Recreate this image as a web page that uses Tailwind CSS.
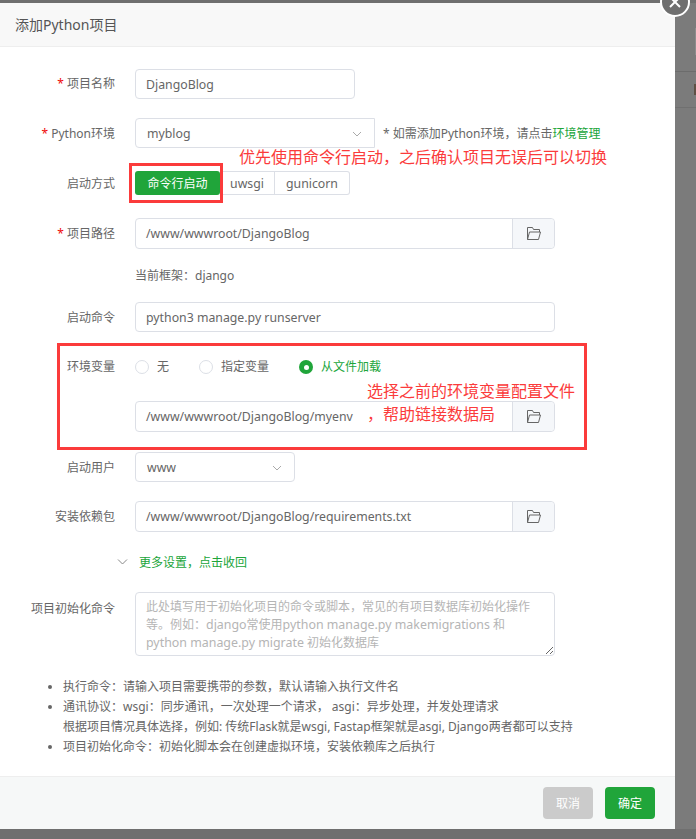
<!DOCTYPE html>
<html lang="zh-CN">

<head>
  <meta charset="UTF-8" />
  <title>添加Python项目</title>
  <script src="https://cdn.jsdelivr.net/npm/@tailwindcss/browser@4"></script>
</head>

<body class="relative h-[839px] w-[696px] overflow-hidden bg-[#7b7b7b] font-['Noto_Sans','Noto_Sans_CJK_SC',sans-serif] text-[12px] text-[#666]">

  <!-- page behind the overlay -->
  <div class="absolute left-[675px] top-[71px] h-[1px] w-[21px] bg-[#6c6c6c]"></div>
  <div class="absolute left-[675px] top-[107px] h-[1px] w-[21px] bg-[#707070]"></div>
  <div class="absolute left-[695px] top-[28px] h-[27px] w-[1px] bg-[#8c8c8c]"></div>
  <div class="absolute left-[694px] top-[84px] h-[11px] w-[2px] bg-[#5f5045]"></div>

  <div class="h-[3px] bg-[#6f6f6f]"></div>

  <!-- modal -->
  <div class="flex h-[826px] w-[675px] flex-col rounded-br-[3px] bg-white">
    <div class="flex h-[44px] items-center border-b border-[#eee] bg-[#f8f8f8] pl-[15px] text-[14px] text-[#555]">添加Python项目</div>

    <div class="flex-1 pt-[22px]">
      <div class="flex h-[30px] items-center">
        <label class="w-[115px] text-right"><span class="text-[#ef0808]">*</span> 项目名称</label>
        <div class="ml-[20px] flex h-[30px] w-[220px] items-center rounded-[4px] border border-[#dcdfe6] pl-[10px] pt-[2px] text-[12.3px]">DjangoBlog</div>
      </div>

      <div class="mt-[19px] flex h-[30px] items-center">
        <label class="w-[115px] pt-[1px] text-right"><span class="text-[#ef0808]">*</span> Python环境</label>
        <div class="ml-[20px] flex h-[30px] w-[240px] items-center justify-between rounded-l-[4px] border border-[#dcdfe6] pl-[11px] pr-[12px] pt-[2px] text-[12.3px]">
          myblog
          <svg class="h-[6px] w-[10px]" viewBox="0 0 10 6" fill="none" stroke="#aaa"><path d="M1 1l4 4 4-4" /></svg>
        </div>
        <span class="ml-[8px] pt-[1px]">* 如需添加Python环境，请点击<span class="text-[#20a53a]">环境管理</span></span>
      </div>

      <div class="mt-[23px] flex h-[24px] items-center">
        <label class="w-[115px] pt-[2px] text-right">启动方式</label>
        <div class="ml-[20px] flex h-[24px]">
          <div class="flex w-[85px] items-center justify-center rounded-[3px] bg-[#20a53a] pt-[2px] text-white">命令行启动</div>
          <div class="flex w-[55px] items-center justify-center border-y border-r border-[#dcdfe6] pt-[2px] text-[12.3px]">uwsgi</div>
          <div class="flex w-[75px] items-center justify-center rounded-r-[3px] border-y border-r border-[#dcdfe6] pt-[2px] text-[12.3px]">gunicorn</div>
        </div>
      </div>

      <div class="mt-[23px] flex h-[31px] items-center">
        <label class="w-[115px] text-right"><span class="text-[#ef0808]">*</span> 项目路径</label>
        <div class="ml-[20px] flex h-[31px] w-[420px] rounded-[4px] border border-[#dcdfe6]">
          <div class="flex flex-1 items-center pl-[10px] pt-[2px] text-[12.3px]">/www/wwwroot/DjangoBlog</div>
          <div class="flex w-[42px] items-center justify-center rounded-r-[4px] border-l border-[#dcdfe6] bg-[#f5f7fa]">
            <svg class="h-[13px] w-[14px]" viewBox="0 0 14 13" fill="none" stroke="#666"><path d="M.5 12.500V.5h5l1 2h6v2.500M.5 12.500h11l2-7.500H2.500l-2 7.500z" /></svg>
          </div>
        </div>
      </div>

      <div class="ml-[135px] mt-[18px] flex h-[16px] items-center pt-[1px]">当前框架：django</div>

      <div class="mt-[19px] flex h-[30px] items-center">
        <label class="w-[115px] pt-[1px] text-right">启动命令</label>
        <div class="ml-[20px] flex h-[30px] w-[420px] items-center rounded-[4px] border border-[#dcdfe6] pl-[10px] pt-[2px] text-[12.3px]">python3 manage.py runserver</div>
      </div>

      <div class="mt-[25px] flex h-[20px] items-center">
        <label class="w-[115px] text-right">环境变量</label>
        <div class="ml-[20px] flex items-center">
          <span class="h-[14px] w-[14px] rounded-full border border-[#dcdfe6]"></span>
          <span class="ml-[8px]">无</span>
          <span class="ml-[30px] h-[14px] w-[14px] rounded-full border border-[#dcdfe6]"></span>
          <span class="ml-[8px]">指定变量</span>
          <span class="ml-[30px] flex h-[14px] w-[14px] items-center justify-center rounded-full bg-[#20a53a]"><span class="h-[5px] w-[5px] rounded-full bg-white"></span></span>
          <span class="ml-[8px] text-[#20a53a]">从文件加载</span>
        </div>
      </div>

      <div class="ml-[135px] mt-[24px] flex h-[31px] w-[420px] rounded-[4px] border border-[#dcdfe6]">
        <div class="flex flex-1 items-center pl-[10px] pt-[2px] text-[12.3px]">/www/wwwroot/DjangoBlog/myenv</div>
        <div class="flex w-[42px] items-center justify-center rounded-r-[4px] border-l border-[#dcdfe6] bg-[#f5f7fa]">
          <svg class="h-[13px] w-[14px]" viewBox="0 0 14 13" fill="none" stroke="#666"><path d="M.5 12.500V.5h5l1 2h6v2.500M.5 12.500h11l2-7.500H2.500l-2 7.500z" /></svg>
        </div>
      </div>

      <div class="mt-[20px] flex h-[30px] items-center">
        <label class="w-[115px] pt-[1px] text-right">启动用户</label>
        <div class="ml-[20px] flex h-[30px] w-[160px] items-center justify-between rounded-[4px] border border-[#dcdfe6] pl-[11px] pr-[12px] pt-[2px] text-[12.3px]">
          www
          <svg class="h-[6px] w-[10px]" viewBox="0 0 10 6" fill="none" stroke="#aaa"><path d="M1 1l4 4 4-4" /></svg>
        </div>
      </div>

      <div class="mt-[19px] flex h-[31px] items-center">
        <label class="w-[115px] pt-[1px] text-right">安装依赖包</label>
        <div class="ml-[20px] flex h-[31px] w-[420px] rounded-[4px] border border-[#dcdfe6]">
          <div class="flex flex-1 items-center pl-[10px] pt-[2px] text-[12.3px]">/www/wwwroot/DjangoBlog/requirements.txt</div>
          <div class="flex w-[42px] items-center justify-center rounded-r-[4px] border-l border-[#dcdfe6] bg-[#f5f7fa]">
            <svg class="h-[13px] w-[14px]" viewBox="0 0 14 13" fill="none" stroke="#666"><path d="M.5 12.500V.5h5l1 2h6v2.500M.5 12.500h11l2-7.500H2.500l-2 7.500z" /></svg>
          </div>
        </div>
      </div>

      <div class="ml-[117px] mt-[21px] flex h-[18px] items-center text-[#20a53a]">
        <svg class="h-[6px] w-[11px]" viewBox="0 0 11 6" fill="none" stroke="#888"><path d="M1 .5l4.500 4.500L10 .5" /></svg>
        <span class="ml-[11px] pt-[1px]">更多设置，点击收回</span>
      </div>

      <div class="mt-[21px] flex items-start">
        <label class="w-[115px] pt-[8px] text-right">项目初始化命令</label>
        <div class="relative ml-[20px] h-[64px] w-[420px] rounded-[4px] border border-[#dcdfe6] px-[10px] pt-[5px] leading-[18px] text-[#b5b5b5]">
          此处填写用于初始化项目的命令或脚本，常见的有项目数据库初始化操作<br />等。例如：<span class="text-[12.4px]">django</span>常使用<span class="text-[12.4px]">python manage.py makemigrations</span> 和<br /><span class="text-[12.4px]">python manage.py migrate</span> 初始化数据库
          <svg class="absolute bottom-[1px] right-[1px] h-[8px] w-[8px]" viewBox="0 0 8 8" stroke="#666" fill="none"><path d="M1 8l7-7M5 8l3-3" /></svg>
        </div>
      </div>

      <ul class="ml-[63px] mt-[21px] leading-[20px]">
        <li class="relative before:absolute before:left-[-15px] before:top-[8px] before:h-[4px] before:w-[4px] before:rounded-full before:bg-[#666]">执行命令：请输入项目需要携带的参数，默认请输入执行文件名</li>
        <li class="relative before:absolute before:left-[-15px] before:top-[8px] before:h-[4px] before:w-[4px] before:rounded-full before:bg-[#666]">通讯协议：wsgi：同步通讯，一次处理一个请求， asgi：异步处理，并发处理请求<br />根据项目情况具体选择，例如: 传统Flask就是wsgi, Fastap框架就是asgi, Django两者都可以支持</li>
        <li class="relative before:absolute before:left-[-15px] before:top-[8px] before:h-[4px] before:w-[4px] before:rounded-full before:bg-[#666]">项目初始化命令：初始化脚本会在创建虚拟环境，安装依赖库之后执行</li>
      </ul>
    </div>

    <div class="flex h-[53px] items-start justify-end gap-[12px] border-t border-[#eee] bg-[#f6f8f8] pr-[20px] pt-[10px]">
      <button class="h-[32px] w-[50px] rounded-[4px] bg-[#cbcbcb] pt-[2px] text-white">取消</button>
      <button class="h-[32px] w-[50px] rounded-[4px] bg-[#20a53a] pt-[2px] text-white">确定</button>
    </div>
  </div>
  <div class="h-[10px] bg-[#6f6f6f]"></div>

  <!-- close button -->
  <div class="absolute left-[660px] top-[-13px] flex h-[30px] w-[30px] items-center justify-center rounded-full border-[2px] border-white bg-[#6f6f6f]">
    <svg class="h-[12px] w-[12px]" viewBox="0 0 12 12" stroke="#fff" stroke-width="2"><path d="M1 1l10 10M11 1L1 11" /></svg>
  </div>

  <!-- red annotations drawn over the screenshot -->
  <div class="absolute left-[129px] top-[163px] h-[40px] w-[94px] border-[3px] border-[#fb3b3b]"></div>
  <div class="absolute left-[57px] top-[343px] h-[107px] w-[530px] border-[3px] border-[#fb3b3b]"></div>
  <div class="absolute left-[239px] top-[146px] text-[16px] leading-[22px] text-[#fb3b3b]">优先使用命令行启动，之后确认项目无误后可以切换</div>
  <div class="absolute left-[367px] top-[380px] text-[16px] leading-[22px] text-[#fb3b3b]">选择之前的环境变量配置文件</div>
  <div class="absolute left-[367px] top-[403px] text-[16px] leading-[22px] text-[#fb3b3b]">，帮助链接数据局</div>

</body>

</html>
